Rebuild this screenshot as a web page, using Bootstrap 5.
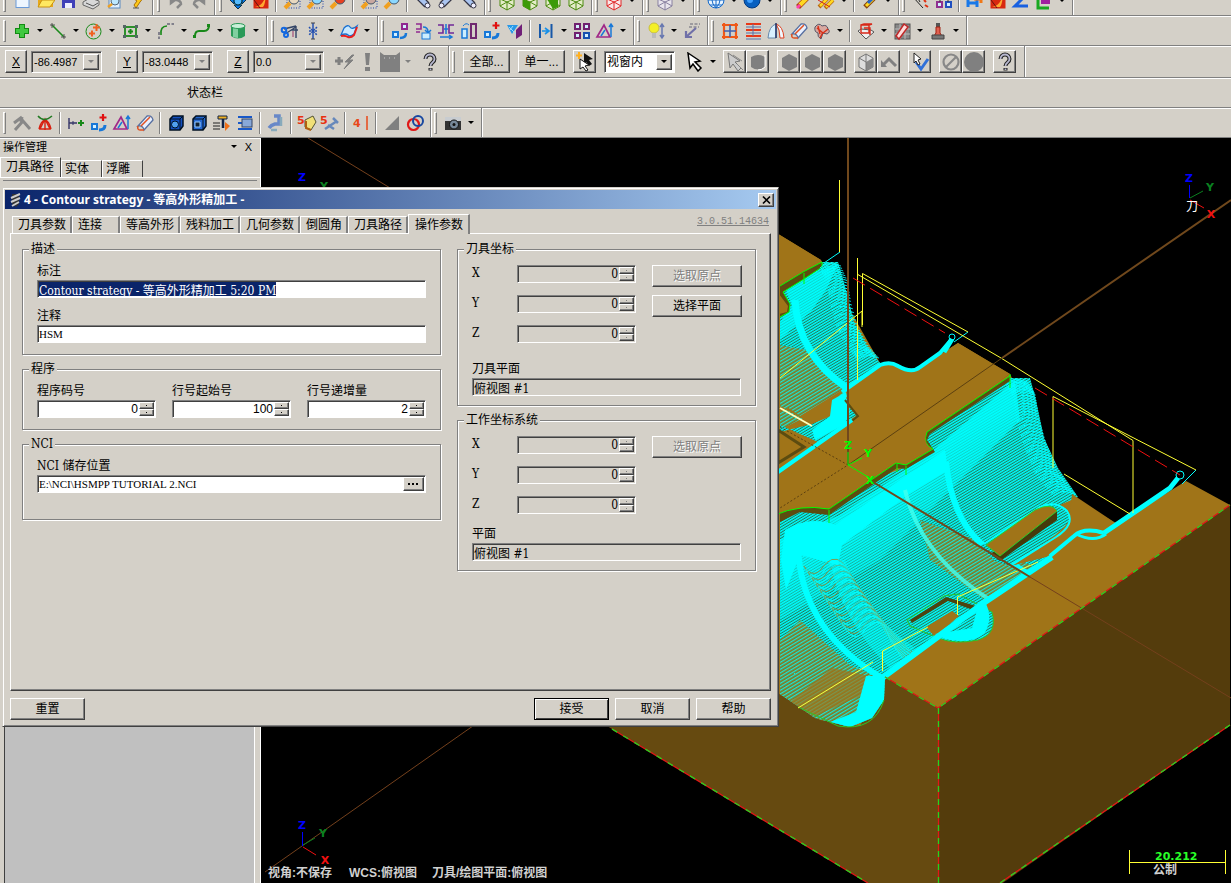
<!DOCTYPE html>
<html lang="zh-CN">
<head>
<meta charset="utf-8">
<meta name="viewport" content="width=device-width, initial-scale=1">
<title>Contour strategy</title>
<link href="https://cdn.jsdelivr.net/npm/bootstrap@5.3.0/dist/css/bootstrap.min.css" rel="stylesheet">
<style>
:root{--face:#d4d0c8;--dark:#404040;--mid:#808080}
body{font:12px/16px "Liberation Sans","Noto Sans CJK SC",sans-serif;background:var(--face);color:#000;height:100vh;overflow:hidden}
button,input,select{font:inherit;color:inherit;border-radius:0}
input{min-width:0}
/* toolbars */
.bar-row{border-bottom:1px solid var(--mid);box-shadow:0 1px 0 #fff}
.bar-row.clipped{margin-top:-14px}
.tool-group{height:29px;padding:0 4px 0 3px;border-right:1px solid var(--mid);box-shadow:1px 0 0 #fff}
.grip{width:3px;height:22px;margin-right:4px;border:1px solid;border-color:#fff var(--mid) var(--mid) #fff}
.tool,.drop{border:0;background:none;padding:0;height:24px;display:flex;align-items:center;justify-content:center}
.tool{width:23px}
.tool.raised{border:1px solid;border-color:#fff var(--dark) var(--dark) #fff;height:23px}
.tool svg{width:20px;height:20px;flex:none}
.drop{width:13px}
.drop::after,.arrow::after{content:"";border:3px solid transparent;border-top-color:#000;border-bottom:0}
.drop.off::after,.arrow.off::after{border-top-color:var(--mid)}
.split{width:1px;height:22px;background:var(--mid);box-shadow:1px 0 0 #fff;margin:0 4px 0 3px}
.raised{background:var(--face);border:1px solid;border-color:#fff var(--dark) var(--dark) #fff;box-shadow:inset -1px -1px 0 var(--mid);padding:0}
.sunken{border:1px solid;border-color:var(--mid) #fff #fff var(--mid);box-shadow:inset 1px 1px 0 var(--dark);background:#fff}
.sunken input,.sunken select{border:0;outline:0;background:none;padding:0 1px 0 0;height:100%;appearance:none}
.sunken.off{background:var(--face)}
.combo{width:71px;height:22px;padding:2px}
.combo input,.combo select{width:50px}
.combo input{font-size:11px}
.arrow{width:16px;height:16px;display:flex;align-items:center;justify-content:center}
.key{width:22px;height:23px;text-decoration:underline}
.key.next{margin-left:14px}
.wide{width:47px;height:23px}
.coord-bar{padding:0 7px 0 5px}
.coord-bar,.pick-bar{height:31px}
.status-bar{height:30px;padding-left:187px}
/* left panel */
.side{width:261px;border-right:1px solid #fff}
.side-title{font-size:11px;height:19px;padding:0 8px 2px 3px}
.side-title button{border:0;background:none;padding:0}
.side-tab{border:1px solid;border-color:#fff var(--dark) transparent #fff;background:var(--face);height:17px;padding:0 12px 0 3px;line-height:15px;border-bottom:0}
.side-tab.on{height:20px;padding:0 6px 0 5px}
.side-tabs{border-bottom:1px solid #fff}
.side-rule{border-top:1px solid var(--mid);margin:2px 3px 8px}
.side-list{background:#c0c0c0;border-left:1px solid var(--dark);border-right:1px solid #fff;margin:0 5px 0 4px}
.scene{background:#000;min-width:0}
/* dialog */
.dlg{position:absolute;left:2px;top:187px;width:777px;background:var(--face);border:1px solid;border-color:var(--face) var(--dark) var(--dark) var(--face);box-shadow:inset 1px 1px 0 #fff,inset -1px -1px 0 var(--mid);padding:2px 2px 6px}
.dlg-title{height:19px;background:linear-gradient(90deg,#0a246a,#a6caf0);color:#fff;font:bold 12px/18px "Noto Sans","Noto Sans CJK SC",sans-serif;padding:0 2px 0 4px}
.dlg-title svg{width:13px;height:16px;margin-right:2px}
.dlg-close{width:16px;height:14px}
.dlg-body{padding:5px 5px 0}
.pg-tabs{padding-left:2px}
.pg-tab{height:17px;min-width:48px;padding:0 4px 0 5px;text-align:left;background:var(--face);border:0;border-top:1px solid #fff;border-left:1px solid #fff;border-right:2px solid var(--mid);line-height:15px;white-space:nowrap}
.pg-tab.on{height:20px;padding:0 5px 0 6px;margin-bottom:-1px;line-height:18px}
.ver{font:10px/14px "Liberation Mono",monospace;color:var(--mid);margin:0 2px 4px auto}
.pg{border:1px solid;border-color:#fff var(--dark) var(--dark) #fff;box-shadow:inset -1px -1px 0 var(--mid);min-height:458px;padding:7px 14px 0 11px}
.box{border:1px solid var(--mid);box-shadow:1px 1px 0 #fff,inset 1px 1px 0 #fff;padding:6px 14px 11px;margin-bottom:6px}
.box.tall{padding-bottom:26px}
.box legend{float:none;width:auto;font-size:12px;line-height:16px;height:16px;margin:0 0 0 -8px;padding:0 2px;background:var(--face)}
.box label{display:block;line-height:16px;margin-bottom:1px;white-space:nowrap}
.box .second{padding-top:10px}
.fld{height:18px;padding:1px}
.sim,.sim input{font-family:"DejaVu Serif Condensed","Noto Sans CJK SC",serif}
.latin{font-family:"Liberation Serif",serif;font-size:11px}
.fld input{line-height:14px}
.sim ::selection{background:#0a246a;color:#fff}
.spin{width:119px}
.spin input{text-align:right}
.spin-keys{width:15px}
.spin-keys button{flex:1;font-size:0;display:flex;align-items:center;justify-content:center}
.spin-keys button::after{content:"";width:1px;height:1px;background:#000}
.off .spin-keys button::after{background:var(--mid)}
.axis-name{width:45px}
.col-l{flex:419 1 0;min-width:0}.col-r{flex:299 1 0;min-width:0}
.col-r .box{padding:8px 14px 9px}
.col-r .plane{padding-top:18px}
.col-r .plane.near{padding-top:12px}
.rows{row-gap:12px}
.pick{width:90px;height:22px}
.pick:disabled{color:var(--mid);text-shadow:1px 1px 0 #fff}
.acts{gap:6px;padding-top:7px}
.act{width:75px;height:22px}
.act.main{border-color:#000;box-shadow:inset 1px 1px 0 #fff,inset -1px -1px 0 var(--dark)}
</style>
</head>
<body class="d-flex flex-column position-relative">
<header class="flex-shrink-0">
  <div class="bar-row clipped d-flex">
    <div class="tool-group d-flex align-items-center" data-tools="new open save print preview keyt"></div>
    <div class="tool-group d-flex align-items-center ps-1" data-tools="undo redo"></div>
    <div class="tool-group d-flex align-items-center ps-1" data-tools="fit repaint | zoomwin zoomsel zoomred | zoomout zoomin | tube tube2 tube"></div>
    <div class="tool-group d-flex align-items-center" data-tools="hexg hexg1 hexg2 hexg"></div>
    <div class="tool-group d-flex align-items-center" data-tools="hexr v"></div>
    <div class="tool-group d-flex align-items-center" data-tools="hexp v"></div>
    <div class="tool-group d-flex align-items-center" data-tools="globe v ball v"></div>
    <div class="tool-group d-flex align-items-center" data-tools="pencil pencils v | pencilb v"></div>
    <div class="tool-group d-flex align-items-center" data-tools="analyze tree | hsm repaint zee layer v"></div>
  </div>
  <div class="bar-row d-flex">
    <div class="tool-group d-flex align-items-center" data-tools="plus v line v circ v rect v fillet v spline v cyl v"></div>
    <div class="tool-group d-flex align-items-center ps-1" data-tools="trim brk v surf v"></div>
    <div class="tool-group d-flex align-items-center" data-tools="move rot mirror scale moveplus proj | offset v array tri v"></div>
    <div class="tool-group d-flex align-items-center" data-tools="bulb v dim"></div>
    <div class="tool-group d-flex align-items-center" data-tools="grid4 lines fan roll flower v | sheet v hatch v drill v"></div>
  </div>
  <div class="bar-row d-flex">
    <form class="tool-group coord-bar d-flex align-items-center">
      <button type="button" class="raised key">X</button>
      <div class="combo sunken off d-flex ms-1"><input aria-label="X" value="-86.4987"><button type="button" class="raised arrow off" aria-label="X 列表"></button></div>
      <button type="button" class="raised key next">Y</button>
      <div class="combo sunken off d-flex ms-1"><input aria-label="Y" value="-83.0448"><button type="button" class="raised arrow off" aria-label="Y 列表"></button></div>
      <button type="button" class="raised key next">Z</button>
      <div class="combo sunken off d-flex ms-1 me-2"><input aria-label="Z" value="0.0"><button type="button" class="raised arrow off" aria-label="Z 列表"></button></div>
      <div class="d-flex me-1" data-plain="flash bang face vo"></div>
      <div class="d-flex" data-plain="help"></div>
    </form>
    <form class="tool-group pick-bar d-flex align-items-center" data-grip>
      <button type="button" class="raised wide me-2 ms-1">全部...</button>
      <button type="button" class="raised wide me-2">单一...</button>
      <div class="d-flex me-2" data-raised="cursors"></div>
      <div class="combo sunken d-flex me-2"><select aria-label="选取方式"><option>视窗内</option></select><span class="raised arrow"></span></div>
      <div class="d-flex me-1" data-plain="cursor v"></div>
      <div class="d-flex me-2" data-raised="gcursor gcyl"></div>
      <div class="d-flex me-2" data-raised="ghex ghex ghex"></div>
      <div class="d-flex me-2" data-raised="gbox gback"></div>
      <div class="d-flex me-2" data-raised="okcur"></div>
      <div class="d-flex me-2" data-raised="noent gball"></div>
      <div class="d-flex me-1" data-raised="help"></div>
    </form>
  </div>
  <div class="bar-row status-bar d-flex align-items-center">状态栏</div>
  <div class="bar-row d-flex">
    <div class="tool-group d-flex align-items-center" data-tools="gzig net | step moveplus tri roll | cube cubeh tfeed spool | mill | five fiveb | four | gtri rings"></div>
    <div class="tool-group d-flex align-items-center" data-tools="camera v"></div>
  </div>
</header>

<main class="d-flex flex-fill overflow-hidden">
  <aside class="side d-flex flex-column flex-shrink-0">
    <div class="side-title d-flex align-items-center"><span class="me-auto">操作管理</span><button class="drop" aria-label="菜单"></button><button class="ms-1" aria-label="关闭">X</button></div>
    <div class="side-tabs d-flex align-items-end">
      <button class="side-tab on">刀具路径</button><button class="side-tab">实体</button><button class="side-tab">浮雕</button>
    </div>
    <div class="side-rule"></div>
    <div class="side-list flex-fill"></div>
  </aside>
  <section class="scene flex-fill">
    <svg id="model" class="d-block w-100 h-100" viewBox="261 138 970 745" preserveAspectRatio="xMinYMin slice" role="img" aria-label="刀具路径">
      <defs>
        <pattern id="pa" width="6" height="2.4" patternUnits="userSpaceOnUse" patternTransform="rotate(-31)"><rect width="6" height="2.4" fill="#20785c"/><rect width="6" height="1.4" fill="#0ff"/></pattern>
        <pattern id="pb" width="6" height="3" patternUnits="userSpaceOnUse" patternTransform="rotate(-31)"><rect width="6" height="3" fill="#86741c"/><rect width="6" height="1.3" fill="#18e8d8"/></pattern>
        <linearGradient id="fadeL" gradientUnits="userSpaceOnUse" x1="900" y1="470" x2="960" y2="570"><stop offset="0" stop-color="#0ff"/><stop offset="1" stop-color="#0ff" stop-opacity="0"/></linearGradient>
        <clipPath id="bore"><path d="M1010 378L1030 378 1036 400 1044 438 1058 468 1078 497 1060 505 1040 506 984 545 1010 566 1053 555 985 600 885 677 884 700 872 718 850 727 815 718 780 694V516L800 508 829 511 878 478 905 467 930 453 925 436Z"/></clipPath>
      </defs>
      <!-- block faces -->
      <path fill="#664a10" d="M560 698L780 660 885 677 938 708V925L612 729Z"/>
      <path fill="#543c0c" d="M938 708L1230 505V725L938 928Z"/>
      <path fill="#a07418" d="M770 229L821 260 850 310 880 363 915 371 958 343 1010 374 1068 494 1117 524 1186 481 1230 505 938 708 885 677 860 726 820 720 770 688Z"/>
      <!-- upper pocket -->
      <path fill="url(#pa)" d="M780 290L803 273 823 262 838 262 846 290 854 322 868 348 880 363 848 390 827 376 780 398Z"/>
      <path fill="url(#pb)" d="M780 345L806 350 827 376 848 390 838 400 780 430Z"/>
      <path fill="#a07418" d="M780 412L822 392 842 390 830 418 812 424 780 406Z"/>
      <path fill="url(#pb)" d="M780 402L826 380 842 390 800 416Z"/>
      <path fill="#0ff" d="M786 290L806 276 838 264 826 290 812 310 780 340V322L792 306Z" fill-opacity=".7"/>
      <path fill="#5c4c10" stroke="#0f0" d="M780 286L803 272 822 262V267L804 279 783 292 790 304 789 312 780 317"/>
      <path fill="#a07418" d="M779 294L788 306 787 312 779 314ZM770 229L821 260 803 271 779 285Z"/>
      <path fill="none" stroke="#0ff" stroke-width="7" d="M795 300Q798 355 847 388"/>
      <path fill="url(#pa)" d="M780 432L812 424 850 408 857 416 818 442 780 425Z"/>
      <path fill="#0ff" d="M846 392L832 400 830 416 812 430 815 440 845 424 850 412Z"/>
      <path stroke="#ffb" stroke-width="2" d="M780 408L812 426"/>
      <path fill="#a07418" stroke="#5c4c10" stroke-width="3" d="M778 430L804 447 778 463Z"/>
      <g id="waves1" fill="none" stroke="#0ff"></g>
      <!-- main bore -->
      <g clip-path="url(#bore)">
        <path fill="url(#pa)" d="M770 370H1090V740H770Z"/>
        <path fill="url(#pb)" d="M920 520L990 545 1040 570 985 600 930 560Z"/>
        <path fill="url(#pb)" d="M780 640L800 620 850 665 885 680 880 730 780 730Z"/>
        <path fill="#a07418" d="M832 668L878 678 862 695 815 716 785 706Z" fill-opacity=".7"/>
        <path fill="url(#fadeL)" fill-opacity=".8" d="M780 540L840 515 930 453 1015 380 1020 420 950 490 880 560 780 620Z"/>
        <path fill="#0ff" d="M785 530Q810 515 835 525L900 480 945 450 948 470 905 497 842 545 838 565 800 555 786 590 781 560Z"/>
        <g id="rings" fill="none" stroke-width=".9"></g>
        <path fill="none" stroke="#0ff" stroke-width="6" d="M798 545Q800 630 882 678"/>
        <path fill="none" stroke="#0ff" stroke-width="6" d="M946 462Q952 520 984 546L1030 575"/>
        <path fill="none" stroke="#4fe" stroke-width="4" stroke-opacity=".8" d="M905 490Q920 555 990 600"/>
        <path fill="#0ff" fill-opacity=".45" d="M830 560Q840 620 890 668L915 648Q860 610 845 560Z"/>
        <path fill="#0ff" d="M866 676H888V712L850 732 825 724 856 712Z"/>
      </g>
      <g id="waves2" fill="none" stroke="#0ff"></g>
      <path fill="none" stroke="#28c828" d="M884 700Q874 732 838 726L798 707"/>
      <!-- plateau -->
      <path fill="#5c4c10" d="M1010 374V381L930 434 927 440 935 452 906 469 897 468 829 515 800 512 780 522V508L1005 374Z"/>
      <path fill="#a07418" stroke="#0f0" d="M775 515Q800 504 829 509L896 463 906 465 933 449Q922 444 927 432L1010 376V374"/>
      <path fill="#a07418" d="M775 472L850 420 857 415 846 398 850 391 890 363 915 371 958 343 1010 374 927 430Q922 442 931 449L906 464 896 462 829 508Q800 503 775 514Z"/>
      <path fill="none" stroke="#5c4c10" stroke-width="2" d="M845 400L858 416 848 424"/>
      <path fill="none" stroke="#0ff" stroke-width="4" d="M778 472L852 420M842 392L880 365Q890 361 898 366 912 374 920 367L940 353 951 340"/>
      <path fill="none" stroke="#0f0" d="M829 510V523M897 464V472M906 466V475M1010 375V388M804 273V284"/>
      <!-- key slot -->
      <path fill="#a07418" d="M1072 494L1117 524 1076 530 1050 556 1010 566 1068 530Z"/>
      <path fill="url(#pa)" d="M980 546L1040 506Q1068 500 1070 518 1068 530 1010 566L995 561Z"/>
      <path fill="none" stroke="#0ff" stroke-width="2" d="M984 544L1040 507Q1056 500 1067 511 1076 524 1056 537L1010 566"/>
      <path fill="#453a0c" d="M990 554L1057 511V520L1000 561Z"/>
      <path fill="#a07418" stroke="#2ad02a" d="M986 545L1035 510Q1052 502 1057 511L1000 556Z"/>
      <!-- front pocket -->
      <path fill="url(#pa)" stroke="#28c828" d="M907 620L944 596 958 594 992 612Q998 634 978 640 955 645 938 638L910 626Z"/>
      <path fill="#4c4410" d="M910 620L946 597 976 606 973 610 948 601 912 623Z"/>
      <path fill="#a07418" d="M926 627L952 611 959 616 935 637Z"/>
      <path fill="#0ff" d="M985 602Q994 618 984 634 970 645 945 639L935 634 972 628 977 610Z"/>
      <path fill="none" stroke="#0ff" stroke-width="6" d="M882 678L985 602 1052 557"/>
      <path fill="none" stroke="#0ff" stroke-width="4" d="M1050 556L1074 536Q1084 527 1104 533"/>
      <path fill="none" stroke="#0ff" stroke-width="3" d="M1076 534Q1094 543 1106 534"/>
      <path fill="none" stroke="#0ff" stroke-width="5" d="M1104 533L1170 488 1178 478M944 352L952 339"/>
      <g fill="none" stroke="#0ff"><circle cx="952" cy="337" r="3"/><circle cx="1180" cy="475" r="4"/><path d="M954 342L968 332M1182 484L1196 470M840 252L824 263"/></g>
      <!-- rapid moves -->
      <g fill="none" stroke="#ff3">
        <path d="M839.500 180V252M857.500 258V380M862.500 325V273.500L968 332M857 274L1001 358 1133 440.500V513M1196 470L1053 396.500V468M1064 474L1130 514M780 378L862 311V327M798 708L873 662M882.500 671V651L928 627M957.500 615V597L1038 562"/>
      </g>
      <path fill="none" stroke="#f01010" stroke-dasharray="14 6" d="M853 278L945 333M1035 388L1180 475"/>
      <!-- construction axes -->
      <g fill="none" stroke="#70481c">
        <path stroke-width="2" d="M848 138V465M1231 200L1002 358M868 479L1030 577"/>
        <path stroke="#74401c" d="M308 138L400 194M265 872L480 721M1030 577L1231 698"/>
        <path stroke="#5c4010" d="M1002 358L848 465"/><path stroke="#5c4010" stroke-dasharray="2 2" d="M780 427L848 465 780 508"/>
      </g>
      <g fill="none" stroke="#e01818" stroke-width="1.300"><path d="M885 677L938 708 1230 505M938.500 708V883M1230 725L1000 883M612 729L868 883"/><path stroke="#20d820" stroke-dasharray="6 7" d="M885 677L938 708 1230 505M938.500 708V883M1230 725L1000 883M612 729L868 883"/></g>
      <path fill="none" stroke="#0f0" d="M848 452V465L862 458M848 465L868 477"/>
      <g font-family="DejaVu Sans" font-size="11" font-weight="bold" text-anchor="middle">
        <g fill="#0f0"><text x="848" y="449">Z</text><text x="868" y="457">Y</text><text x="870" y="484">X</text></g>
        <g fill="#00f"><text x="302" y="181">Z</text><text x="302" y="829">Z</text><text x="1189" y="182">Z</text></g>
        <g fill="#0a8020"><text x="324" y="190">Y</text><text x="323" y="837">Y</text><text x="1210" y="191">Y</text></g>
        <g fill="#f01010"><text x="325" y="864">X</text><text x="1211" y="218">X</text></g>
      </g>
      <g fill="none"><path stroke="#00f" d="M302.500 832V846M1189.500 185V198"/><path stroke="#0a8020" d="M303 845L315 838M1190 198L1203 191"/><path stroke="#f01010" d="M303 847L316 855M1190 200L1204 208"/></g>
      <g font-family="'Liberation Sans','Noto Sans CJK SC',sans-serif" font-size="12" font-weight="bold" fill="#d0d0d0">
        <text x="1186" y="211" font-weight="normal" fill="#fff">刀</text>
        <text x="268" y="877">视角:不保存</text><text x="349" y="877">WCS:俯视图</text><text x="432" y="877">刀具/绘图平面:俯视图</text>
        <text x="1153" y="874">公制</text>
      </g>
      <path stroke="#ff3" d="M1129.500 850V874M1225.500 850V874M1129 862.500H1226"/>
      <text x="1155" y="860" font-family="DejaVu Sans" font-size="11" font-weight="bold" fill="#28ff28">20.212</text>
    </svg>
  </section>
</main>

<div class="dlg" role="dialog" aria-label="Contour strategy">
  <div class="dlg-title d-flex align-items-center">
    <svg viewBox="0 0 13 16"><path d="M3 2h7v10l-3 3-4-3z" fill="#333"/><path d="M2 6l9-4M2 10l9-4M3 14l7-4" stroke="#ccc" stroke-width="2"/></svg>
    <span class="me-auto">4 - Contour strategy - 等高外形精加工 -</span>
    <button class="raised dlg-close d-flex align-items-center justify-content-center" aria-label="关闭"><svg class="m-0" viewBox="0 0 13 16"><path d="M3 4.500l7 7M10 4.500l-7 7" stroke="#000" stroke-width="1.700"/></svg></button>
  </div>
  <div class="dlg-body">
    <div class="pg-tabs d-flex align-items-end" role="tablist">
      <button class="pg-tab" role="tab">刀具参数</button><button class="pg-tab" role="tab">连接</button><button class="pg-tab" role="tab">等高外形</button><button class="pg-tab" role="tab">残料加工</button><button class="pg-tab" role="tab">几何参数</button><button class="pg-tab" role="tab">倒圆角</button><button class="pg-tab" role="tab">刀具路径</button><button class="pg-tab on" role="tab" aria-selected="true">操作参数</button>
      <a href="#" class="ver">3.0.51.14634</a>
    </div>
    <div class="pg d-flex gap-3 align-items-start">
      <div class="col-l">
        <fieldset class="box"><legend>描述</legend>
          <label for="note">标注</label>
          <div class="fld sunken sim d-flex"><input id="note" class="w-100" value="Contour strategy - 等高外形精加工 5:20 PM"></div>
          <label for="memo" class="second">注释</label>
          <div class="fld sunken d-flex"><input id="memo" class="w-100 latin" value="HSM"></div>
        </fieldset>
        <fieldset class="box"><legend>程序</legend>
          <div class="d-flex gap-3">
            <div><label for="pn">程序码号</label><div class="fld sunken spin d-flex" data-spin="pn" data-value="0"></div></div>
            <div><label for="sn">行号起始号</label><div class="fld sunken spin d-flex" data-spin="sn" data-value="100"></div></div>
            <div><label for="inc">行号递增量</label><div class="fld sunken spin d-flex" data-spin="inc" data-value="2"></div></div>
          </div>
        </fieldset>
        <fieldset class="box tall"><legend class="sim">NCI</legend>
          <label for="nci" class="sim">NCI 储存位置</label>
          <div class="fld sunken d-flex"><input id="nci" class="flex-fill latin" value="E:\NCI\HSMPP TUTORIAL 2.NCI"><button class="raised px-1" aria-label="浏览"><svg class="d-block" width="11" height="4"><path d="M0 1h2v2H0zM4 1h2v2H4zM8 1h2v2H8z"/></svg></button></div>
        </fieldset>
      </div>
      <div class="col-r">
        <fieldset class="box"><legend>刀具坐标</legend>
          <div class="d-flex gap-3">
            <div class="d-flex flex-column rows sim">
              <div class="d-flex"><label for="tx" class="axis-name">X</label><div class="fld sunken off spin d-flex" data-spin="tx" data-value="0"></div></div>
              <div class="d-flex"><label for="ty" class="axis-name">Y</label><div class="fld sunken off spin d-flex" data-spin="ty" data-value="0"></div></div>
              <div class="d-flex"><label for="tz" class="axis-name">Z</label><div class="fld sunken off spin d-flex" data-spin="tz" data-value="0"></div></div>
            </div>
            <div class="d-flex flex-column gap-2"><button class="raised pick" disabled>选取原点</button><button class="raised pick">选择平面</button></div>
          </div>
          <label for="tp" class="plane">刀具平面</label>
          <div class="fld sunken off sim d-flex"><input id="tp" class="w-100" value="俯视图 #1" readonly></div>
        </fieldset>
        <fieldset class="box"><legend>工作坐标系统</legend>
          <div class="d-flex gap-3">
            <div class="d-flex flex-column rows sim">
              <div class="d-flex"><label for="wx" class="axis-name">X</label><div class="fld sunken off spin d-flex" data-spin="wx" data-value="0"></div></div>
              <div class="d-flex"><label for="wy" class="axis-name">Y</label><div class="fld sunken off spin d-flex" data-spin="wy" data-value="0"></div></div>
              <div class="d-flex"><label for="wz" class="axis-name">Z</label><div class="fld sunken off spin d-flex" data-spin="wz" data-value="0"></div></div>
            </div>
            <div><button class="raised pick" disabled>选取原点</button></div>
          </div>
          <label for="wp" class="plane near">平面</label>
          <div class="fld sunken off sim d-flex"><input id="wp" class="w-100" value="俯视图 #1" readonly></div>
        </fieldset>
      </div>
    </div>
    <div class="acts d-flex">
      <button class="raised act me-auto">重置</button>
      <button class="raised act main">接受</button><button class="raised act">取消</button><button class="raised act">帮助</button>
    </div>
  </div>
</div>

<script src="https://cdn.jsdelivr.net/npm/bootstrap@5.3.0/dist/js/bootstrap.bundle.min.js"></script>
<script>
const hex = (s, f, extra) => `<path d="M3 7l7-4 7 4v8l-7 4-7-4z" fill="${f}" stroke="${s}"/><path d="M10 11v8M10 11l-7-3M10 11l7-3M3 15l7-4 7 4" stroke="${s}"/>${extra || ''}`;
const lens = (c, more) => `${more || ''}<path d="M3 17l5-5" stroke="#f0a020" stroke-width="4"/><circle cx="12" cy="8" r="5" fill="${c}" stroke="#456"/>`;
const box5 = (x, y, c) => `<rect x="${x}" y="${y}" width="5" height="5" stroke="${c}" stroke-width="2" fill="#d4f0ff"/>`;
const question = '<path d="M5.500 7c0-6 9-6 9 0 0 4-4 3-4 7M10.500 16v2.500" stroke="#222" stroke-width="4"/><path d="M5.500 7c0-6 9-6 9 0 0 4-4 3-4 7M10.500 16.500v1.500" stroke="#b8b8d0" stroke-width="1.800"/>';
const arrowUp = '<path d="M3 1l12 8-5 1 6 6-3 3-5-7-3 4z"';
const icons = {
 new:'<rect x="4" y="2" width="13" height="14.500" fill="#eef6ff" stroke="#6a9ad8"/>',
 open:'<path d="M3 16V4h5l2 3h8v9z" fill="#e8a818"/><path d="M3 16l4-7h13l-5 7z" fill="#ffe860" stroke="#c89010"/>',
 save:'<path d="M4 3h13v14H4z" fill="#4040b8"/><path d="M7 12h7v5H7zM7 3h7v5H7z" fill="#eef"/>',
 print:'<path d="M2 11l7-4 9 3v4l-6 4-10-4z" fill="#d8d8d8" stroke="#666"/><path d="M5 12l7 3 5-3" stroke="#555"/>',
 preview:'<rect x="5" y="2" width="11" height="15" fill="#e0f0ff" stroke="#5a8ac0"/><circle cx="11" cy="10" r="4" fill="#bde8ff" stroke="#567"/><path d="M4 16l4-3" stroke="#f0a020" stroke-width="2.500"/>',
 keyt:'<path d="M3 5h15l-5 6-4 6-2-3 3-4z" fill="#ffc818" stroke="#a87008"/><path d="M6 17h6" stroke="#555"/>',
 undo:'<path d="M5 9q10-1 10 4l-4 4M5 6v6l4-3z" stroke="#888" stroke-width="2.500"/>', redo:'<path d="M15 9q-10-1-10 4l4 4M15 6v6l-4-3z" stroke="#888" stroke-width="2.500"/>',
 fit:'<path d="M10 18l-4-4h8zM2 9l4-4v8zM18 9l-4-4v8z" fill="#0878e8" stroke="#134"/><circle cx="10" cy="10" r="4" fill="#5bf" stroke="#034"/>',
 repaint:'<rect x="2.500" y="2.500" width="15" height="15" fill="#d82810"/><path d="M4 16q8-1 11-12-1 10-3 12z" fill="#ffa830"/><path d="M3 9l6 8" stroke="#611"/>',
 zoomwin:lens('#e8d8c0','<rect x="5" y="8" width="13" height="9" stroke="#24a" stroke-dasharray="1 1.500"/>'), zoomsel:lens('#8cd8ff','<rect x="5" y="8" width="13" height="9" stroke="#24a" stroke-dasharray="1 1.500"/>'),
 zoomred:lens('#e84020'), zoomout:lens('#c8a8a0','<rect x="5" y="8" width="13" height="9" stroke="#24a" stroke-dasharray="1 1.500"/>'), zoomin:lens('#8cd8ff'),
 tube:'<path d="M4 4l10 10" stroke="#334" stroke-width="7"/><path d="M4 4l10 10" stroke="#aac4f0" stroke-width="4.500"/><circle cx="14.500" cy="14.500" r="2.500" fill="#eef" stroke="#334"/>',
 tube2:'<path d="M16 4L6 14" stroke="#334" stroke-width="7"/><path d="M16 4L6 14" stroke="#aac4f0" stroke-width="4.500"/><circle cx="5.500" cy="14.500" r="2.500" fill="#eef" stroke="#334"/>',
 hexg:hex('#4c8a10','#e4ecc8'), hexg1:hex('#4c8a10','#e4ecc8','<path d="M3 8l7 3v8l-7-4z" fill="#3c9a08"/>'), hexg2:hex('#4c8a10','#e4ecc8','<path d="M4 8l7-3 4 3v8l-5 2z" fill="#3c9a08"/>'), hexr:hex('#e02828','#fae8e8'), hexp:hex('#8880a0','#e8e4ec'),
 globe:'<circle cx="10" cy="9" r="8" fill="#e8f4ff" stroke="#1468c8"/><path d="M2 9h16M10 1v16M4 14h12M10 1q-8 8 0 16M10 1q8 8 0 16" stroke="#1468c8"/>',
 ball:'<circle cx="10" cy="9" r="8" fill="#0860c0" stroke="#023a80"/><circle cx="8" cy="9" r="3" fill="#40a0ff"/>',
 pencil:'<path d="M5 16L15 6" stroke="#a84810" stroke-width="5.500"/><path d="M7 14l8-8" stroke="#ffd820" stroke-width="4"/><path d="M4 17l3-3" stroke="#f4a" stroke-width="3"/>',
 pencils:'<path d="M3 16L13 6M9 17l8-8" stroke="#b86810" stroke-width="4"/><path d="M4 15L13 6M10 16l7-7" stroke="#ffd820" stroke-width="2.500"/><path d="M2 9l12 7" stroke="#d02020"/>',
 pencilb:'<path d="M5 16L15 6" stroke="#86420a" stroke-width="5"/><path d="M6 15l9-9" stroke="#ffd820" stroke-width="3"/><path d="M8 12l4-4" stroke="#26c" stroke-width="3"/>',
 analyze:'<path d="M2 6l10 11M5 4l4 7" stroke="#222"/><path d="M13 9l2 2M14 14l3 2" stroke="#e03010" stroke-width="2"/>',
 tree:box5(3,11,'#903090')+box5(12,11,'#2050c0')+'<path d="M6 4v7M14 4v7M6 8h8" stroke="#333"/>',
 hsm:'<path d="M3 3v13M3 12h9M12 4v12" stroke="#1878e8" stroke-width="3"/><path d="M9 8h7v4" stroke="#f07818" stroke-width="3"/>',
 zee:'<path d="M4 3h12L4 15h13" stroke="#1860e0" stroke-width="3"/>', layer:'<path d="M4 4v13h11" stroke="#18a820" stroke-width="3"/><rect x="7" y="4" width="9" height="9" fill="#a020a0"/>',
 plus:'<path d="M10 3v14M3 10h14" stroke="#138a13" stroke-width="6"/><path d="M10 4v12M4 10h12" stroke="#40c840" stroke-width="4"/>',
 line:'<path d="M4 4l12 12" stroke="#1a8a1a" stroke-width="1.600"/><path d="M4 2v5M2 4h5M16 13v5M13 16h5" stroke="#555"/>',
 circ:'<circle cx="9.500" cy="10.500" r="7.500" stroke="#1a8a1a"/><path d="M12.500 3v7M9 6.500h7M8 9.500v6M5 12.500h6" stroke="#f06020" stroke-width="2"/>',
 rect:'<rect x="5" y="6" width="11" height="9" stroke="#1a8a1a" stroke-width="1.800"/><path d="M10.500 8v5M8 10.500h5" stroke="#1a8a1a" stroke-width="2"/><path d="M3 4h3v3H3zM15 4h3v3h-3zM3 14h3v3H3zM15 14h3v3h-3z" fill="#566"/>',
 fillet:'<path d="M5 14Q4 5 11 5" stroke="#1a8a1a" stroke-width="1.600"/><path d="M11 3h7M3 11v7" stroke="#667" stroke-width="1.500" stroke-dasharray="3 1.500"/>',
 spline:'<path d="M3 15q0-5 4-5h5q5 0 5-6" stroke="#188818" stroke-width="2"/><path d="M1 14h3v3H1zM15 3h3v3h-3z" fill="#188818"/>',
 cyl:'<path d="M3 5v10q7 5 14 0V5z" fill="#2a9a58"/><path d="M5 6v10q3 1 5 1V6z" fill="#80d0a0"/><ellipse cx="10" cy="5" rx="7" ry="2.500" fill="#c8f0d8" stroke="#2a9a58"/>',
 trim:'<path d="M4 8l12-3M5 13l11-7M16 5v12M11 9h7" stroke="#346" stroke-width="1.400"/><circle cx="4" cy="9" r="2.300" stroke="#1468e0" stroke-width="2"/><circle cx="6" cy="14" r="2" stroke="#1468e0" stroke-width="2"/><path d="M13 10v6" stroke="#936"/>',
 brk:'<path d="M10 2v16" stroke="#2450b0" stroke-width="1.500"/><path d="M6 6l8 8M14 6l-8 8M6 10h8" stroke="#2450b0" stroke-width="1.500" stroke-dasharray="2 1"/><path d="M8 2h4M8 18h4" stroke="#444"/>',
 surf:'<path d="M2 14l3-7q4-4 6-1t7-1l-3 8q-4 3-6 1t-7 0z" fill="#c8e8ff" stroke="#1870d0" stroke-width="1.300"/><path d="M2 15q4-1 7 1 3 1 6-2l3-8" stroke="#e82020" stroke-width="2"/>',
 move:box5(3,11,'#1878d8')+box5(12,3,'#902890')+'<path d="M10 17q6 0 6-5" stroke="#1878d8" stroke-width="2.500"/>',
 rot:'<path d="M3 3h5v5H3M3 11h4" stroke="#902890" stroke-width="1.600"/><path d="M10 6q5 0 5 5M12 9l3 3 3-3" stroke="#1878d8" stroke-width="1.500"/><rect x="9" y="12" width="8" height="6" stroke="#1878d8" fill="#cef"/>',
 mirror:'<path d="M2 4h5v8H2M18 4h-5v8h5" stroke="#702898" stroke-width="1.600"/><path d="M10 3v10M8 8h4M4 16h12M13 14l3 2-3 2" stroke="#1878d8" stroke-width="1.500"/>',
 scale:'<rect x="3" y="8" width="5" height="9" stroke="#1878d8" stroke-width="1.500" fill="#cef"/><rect x="12" y="3" width="5" height="14" stroke="#702870" stroke-width="2"/><path d="M4 5q3-4 6-1" stroke="#1878d8"/>',
 moveplus:box5(3,11,'#1878d8')+'<path d="M10 17q6 0 6-5" stroke="#1878d8" stroke-width="3"/><path d="M14 1v7M10.500 4.500h7" stroke="#e01010" stroke-width="2.200"/>',
 proj:'<path d="M2 4h11l-6 9z" fill="#2898e8"/><path d="M11 9l6-6v11l-6 4z" fill="#702078"/><path d="M4 6l7 7M8 5l-3 4" stroke="#9df"/>',
 offset:'<path d="M4 3v14M15.500 3v14" stroke="#1858a8" stroke-width="2"/><path d="M6 10h7M9 7l4 3-4 3" stroke="#1890e8" stroke-width="1.600"/>',
 array:box5(3,3,'#702070')+box5(12,3,'#702070')+box5(3,12,'#702070')+box5(12,12,'#1850b0'),
 tri:'<path d="M2 16L9 4l6 12z" stroke="#a02888" stroke-width="1.700"/><path d="M6 15l4-6M16 4v12M14 6l2-3 2 3" stroke="#1878d8" stroke-width="1.500"/>',
 bulb:'<circle cx="8" cy="7" r="5" fill="#f4f028" stroke="#c8c040"/><path d="M6 12h4v5H6z" fill="#bbb"/><path d="M16 4v12M14 6l2-3 2 3M14 14l2 3 2-3" stroke="#6878b0" stroke-width="1.500"/>',
 dim:'<path d="M8 3h10M7 6h10" stroke="#667" stroke-dasharray="3 1.500"/><path d="M14 7L4 16M4 10v6h6" stroke="#7070a8" stroke-width="2.200"/>',
 grid4:'<path d="M4 2v16M16 2v16M2 4h16M2 16h16" stroke="#f05818" stroke-width="2.200"/><path d="M10 4v12M4 10h12" stroke="#4060b0" stroke-width="1.600"/>',
 lines:'<path d="M3 3h15M3 9h15M3 15h15" stroke="#e83818" stroke-width="2"/><path d="M3 6h15M3 12h15M3 18h15M10 3v12" stroke="#5870a8"/>',
 fan:'<path d="M2 17Q3 5 10 3v14z" fill="#d8f0ff" stroke="#68a"/><path d="M10 3q7 2 8 14h-4q0-9-4-14z" fill="#f0f8ff" stroke="#e04020"/><path d="M10 2v15" stroke="#236" stroke-width="1.500"/>',
 roll:'<path d="M3 13L12 3q5-1 6 4L9 17q-1-5-6-4z" fill="#e8f0ff" stroke="#5870a0" stroke-width="1.300"/><path d="M6 13l9-9M3 13q-1 4 2 4l4 0" stroke="#e05020" stroke-width="1.500"/>',
 flower:'<path d="M3 6q4-5 7-1 5-2 6 3 3 3-1 5l-4-1-2 6q-4-2-3-6-4-1-3-6z" fill="#d8a8a0" stroke="#556"/><path d="M5 7l6 5 5-4M8 17l3-6M6 5l2 8" stroke="#d83018" stroke-width="1.400"/>',
 sheet:'<path d="M2 10l8 8 8-7-3-2-10-1z" fill="#eee" stroke="#555"/><path d="M5 4h8v8H5zM5 4l3-1h8l-3 1M8 7h6v7" stroke="#d82818" stroke-width="1.400"/>',
 hatch:'<rect x="3" y="3" width="15" height="15" fill="#888" stroke="#555"/><path d="M3 8h15M3 13h15M8 3v15M13 3v15" stroke="#bbb"/><path d="M4 15L12 3l4 3-9 12z" fill="#fdd" stroke="#c02828" stroke-width="1.500"/>',
 drill:'<path d="M8 2h4v4H8z" fill="#555"/><path d="M8 6h4v6l2 3H6l2-3z" fill="#e06050" stroke="#a02010"/><path d="M4 14h12v4H4z" fill="#777" stroke="#444"/>',
 flash:'<path d="M1 9h8M5 5v8" stroke="#808080" stroke-width="3"/><path d="M18 3l-7 7h4l-5 7 9-9h-4l5-5z" fill="#808080" stroke="#808080"/>',
 bang:'<path d="M8 1h5l-1 12H9zM8 15h5v4H8z" fill="#808080"/>', face:'<path d="M0 0l4 3h12l4-3v20H0z" fill="#808080"/><path d="M4 6h1M9 6h1M14 6h1" stroke="#ccc"/>',
 help:question,
 cursors:'<path d="M9 1l9 6-4 1 3 4-3 2-3-4-2 3z" fill="#111"/><path d="M5 7l9 6-4 1 3 4-2 1-3-4-3 2z" fill="#fff" stroke="#111"/><path d="M4 0v7M1 3.500h6" stroke="#ffb020" stroke-width="2"/>',
 cursor:arrowUp+' fill="#fff" stroke="#000" stroke-width="1.500"/>', gcursor:arrowUp+' fill="#ccc" stroke="#777"/><path d="M8 3l9 6M12 12l6 6" stroke="#888"/>',
 gcyl:'<path d="M3 5q7-4 14 0v10q-7 5-14 0z" fill="#808080"/><path d="M17 3v12q-3 3-7 3" stroke="#fff"/>', ghex:'<path d="M3 6l7-4 8 4v9l-8 4-7-4z" fill="#808080"/>',
 gbox:'<path d="M3 6l7-4 7 4v9l-7 4-7-4z" fill="#ddd" stroke="#777"/><path d="M10 10l7-4v9l-7 4z" fill="#888"/><path d="M3 6l7 4v9M10 2v8" stroke="#777"/>', gback:'<path d="M3 14l7-7 7 7" stroke="#808080" stroke-width="3"/><path d="M2 8v7h6z" fill="#808080"/>',
 okcur:'<path d="M6 10l5 7 7-10" stroke="#3070d8" stroke-width="3"/><path d="M4 1l7 6-3 1 2 4-2 1-2-4-2 2z" fill="#fff" stroke="#222"/>',
 noent:'<circle cx="10" cy="10" r="7.500" stroke="#888" stroke-width="2.200"/><path d="M5 15L15 5" stroke="#888" stroke-width="2.200"/>', gball:'<circle cx="10" cy="10" r="10" fill="#808080"/>',
 gzig:'<path d="M2 10l8-6M3 17l8-9 7 8M10 4l-1 5" stroke="#888" stroke-width="3"/>',
 net:'<path d="M10 6L5 16h10z M4 16q2-8 6-9 4 1 6 9M10 6v11" stroke="#d82010" stroke-width="1.400"/><path d="M3 3q6 7 14 0" stroke="#227a22" stroke-width="1.500"/>',
 step:'<path d="M3 5v11M3 10h8" stroke="#336" stroke-width="1.400"/><path d="M7 8v4" stroke="#336"/><path d="M15 7v6M12 10h6" stroke="#188818" stroke-width="2"/>',
 cube:'<path d="M4 6l3-3h10v10l-3 4H4z" fill="#1450c0" stroke="#012" stroke-width="1.500"/><path d="M4 6h10v11M14 6l3-3" stroke="#012"/><circle cx="9" cy="11.500" r="3.500" fill="#50a0f0" stroke="#012"/>',
 cubeh:'<path d="M4 6l3-3h10v10l-3 4H4z" fill="#2468d0" stroke="#012" stroke-width="1.500"/><path d="M4 6h10v11M14 6l3-3" stroke="#012"/><path d="M6 14V9h5v5z" fill="#123" stroke="#9cf"/>',
 tfeed:'<path d="M6 3h9v3H6z" fill="#f0b020" stroke="#124"/><path d="M11 6v9" stroke="#124" stroke-width="2.500"/><path d="M1 10h7M1 13h7M1 16h7" stroke="#222"/><path d="M13 9v9l5-5z" fill="#f07018"/>',
 spool:'<path d="M3 4h14M3 10h5M3 16h14" stroke="#1858c8" stroke-width="2"/><rect x="7" y="6" width="10" height="8" fill="#88a8d8" stroke="#346"/>',
 mill:'<path d="M8 3h5v8h-4q-4 1-6 4" stroke="#6888c8" stroke-width="3.500"/><path d="M15 4v9M5 17h6" stroke="#8ab" stroke-width="2.500"/>',
 five:'<text x="0" y="11" font-family="DejaVu Sans" font-weight="bold" font-size="11" fill="#e83010">5</text><path d="M8 7l8-4 3 6-5 8-6-3z" fill="#f0e078" stroke="#553"/><path d="M9 8v7l5 2" stroke="#b06010" stroke-width="2"/>',
 fiveb:'<text x="0" y="11" font-family="DejaVu Sans" font-weight="bold" font-size="11" fill="#e83010">5</text><path d="M5 16L17 8M8 12l6 4M13 5l5 5" stroke="#68b" stroke-width="2.500"/>',
 four:'<text x="2" y="14" font-family="DejaVu Sans" font-weight="bold" font-size="11" fill="#e84818">4</text><path d="M16 3v14" stroke="#e84818" stroke-width="1.500"/>',
 gtri:'<path d="M3 17L17 3v14z" fill="#808080"/>', rings:'<circle cx="8.500" cy="11.500" r="5.500" stroke="#e01818" stroke-width="2.200"/><circle cx="13" cy="8" r="5" stroke="#1848a0" stroke-width="2"/>',
 camera:'<path d="M2 4h16v13H2z" fill="#333"/><path d="M2 4h16v4H2z" fill="#c8ccd0"/><circle cx="11" cy="11.500" r="4.500" fill="#789" stroke="#111"/><circle cx="11" cy="11.500" r="1.500" fill="#111"/>'
};
const svg = n => `<svg viewBox="0 0 20 20" fill="none" aria-hidden="true">${icons[n]}</svg>`;
const build = (list, cls) => list.split(' ').map(n =>
  n === '|' ? '<span class="split"></span>' :
  n === 'v' || n === 'vo' ? `<button type="button" class="drop${n === 'vo' ? ' off' : ''}" aria-label="更多"></button>` :
  `<button type="button" class="tool ${cls}" aria-label="${n}">${svg(n)}</button>`).join('');
document.querySelectorAll('[data-tools]').forEach(e => e.innerHTML = '<span class="grip"></span>' + build(e.dataset.tools, ''));
document.querySelectorAll('[data-grip]').forEach(e => e.insertAdjacentHTML('afterbegin', '<span class="grip"></span>'));
document.querySelectorAll('[data-plain]').forEach(e => e.innerHTML = build(e.dataset.plain, ''));
document.querySelectorAll('[data-raised]').forEach(e => e.innerHTML = build(e.dataset.raised, 'raised'));
document.querySelectorAll('[data-spin]').forEach(e => e.innerHTML =
  `<input id="${e.dataset.spin}" class="flex-fill w-100" value="${e.dataset.value}"><span class="spin-keys d-flex flex-column flex-shrink-0"><button type="button" class="raised" aria-label="增加"></button><button type="button" class="raised" aria-label="减少"></button></span>`);

/* short wavy passes where the tool leaves the stock */
function waves(id, pts, n, w) {
  let d = '';
  for (let i = 0; i < n; i++) {
    const t = i / (n - 1) * (pts.length - 1), k = Math.min(pts.length - 2, Math.floor(t)), f = t - k;
    const x = pts[k][0] + (pts[k + 1][0] - pts[k][0]) * f, y = pts[k][1] + (pts[k + 1][1] - pts[k][1]) * f;
    d += `M${x - w} ${y + 4}q${w / 2}-6 ${w} -4t${w / 2} 2`;
  }
  document.getElementById(id).innerHTML = `<path d="${d}"/>`;
}
waves('waves1', [[834,264],[841,280],[844,300],[851,325],[862,345],[872,356]], 34, 14);
waves('waves2', [[1020,380],[1028,392],[1031,415],[1040,445],[1050,470],[1068,492]], 44, 15);
/* stepped contours on the cavity floor */
let rings = '';
for (let i = 0; i < 22; i++) rings += `<path stroke="${i % 2 ? '#0ff' : '#8a9040'}" d="M${800 + i * 2} ${560 + i * 3}q12 22 22 8t20 -6q20 ${30 + i} ${40 + i} 60"/>`;
document.getElementById('rings').innerHTML = rings;
const note = document.getElementById('note');
note.focus(); note.select();
</script>
</body>
</html>
